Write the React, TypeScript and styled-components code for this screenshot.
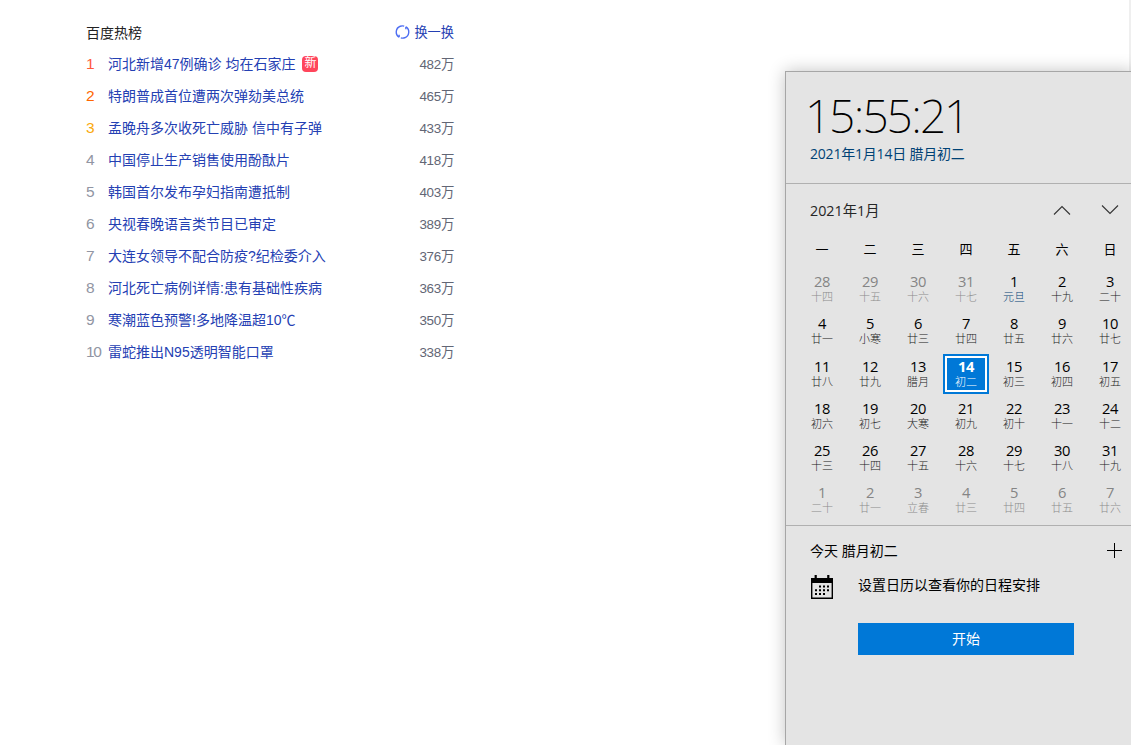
import React from "react";
import styled, { createGlobalStyle } from "styled-components";

const GlobalStyle = createGlobalStyle`
  * { box-sizing: border-box; }
  body { margin: 0; background: #fff; overflow: hidden; }
`;

const Page = styled.div`
  display: flex;
  justify-content: space-between;
  width: 1131px;
  height: 745px;
  overflow: hidden;
  background: #fff;
`;

const HotSearch = styled.section`
  width: 368px;
  margin: 16px 0 0 86px;
  font-family: "Liberation Sans", "Noto Sans CJK SC", sans-serif;
  font-size: 14px;
`;

const HotHeader = styled.header`
  display: flex;
  justify-content: space-between;
  align-items: center;
  height: 31px;
  color: #222;
`;

const Refresh = styled.a`
  display: flex;
  align-items: center;
  gap: 4px;
  font-size: 13.2px;
  color: #2440b3;
`;

const HotList = styled.ol`
  list-style: none;
  margin: 0;
  padding: 0;
`;

const HotItem = styled.li`
  display: flex;
  align-items: center;
  height: 32px;
  white-space: nowrap;
`;

const Rank = styled.span<{ $color: string }>`
  flex: 0 0 22px;
  padding-top: 2px;
  font-size: 15.5px;
  letter-spacing: -1.4px;
  line-height: 20px;
  color: ${(p) => p.$color};
`;

const Topic = styled.a`
  color: #2440b3;
`;

const NewBadge = styled.span`
  width: 16px;
  height: 16px;
  margin: 1px 0 0 7px;
  border-radius: 4px;
  background: #ff455b;
  color: #fff;
  font-size: 12px;
  line-height: 15px;
  text-align: center;
`;

const Heat = styled.span`
  margin-left: auto;
  padding-bottom: 1px;
  font-size: 13.4px;
  letter-spacing: -0.3px;
  color: #626675;
`;

const Backdrop = styled.aside`
  display: flex;
  align-items: flex-end;
  width: 346px;
  border-right: 2px solid #efefef;
`;

const Flyout = styled.section`
  flex: 0 0 346px;
  height: 674px;
  border: solid #a6a6a6;
  border-width: 1px 0 0 1px;
  background: #e4e4e4;
  box-shadow: 0 0 16px rgba(0, 0, 0, 0.24);
  font-family: "Open Sans", "Noto Sans CJK SC", sans-serif;
  font-size: 14px;
  color: #000;
`;

const ClockSection = styled.div`
  height: 112px;
  padding: 15px 0 0 19px;
  border-bottom: 1px solid #b0b0b0;
`;

const Clock = styled.div`
  display: flex;
  height: 57px;
  font-family: "Noto Sans", "Open Sans", sans-serif;
  font-size: 46px;
  font-weight: 200;
  line-height: 56px;
  letter-spacing: -2.3px;
`;

const Colon = styled.span`
  padding: 0 0.4px 0 1px;
`;

const Today = styled.div`
  padding-left: 5px;
  line-height: 20px;
  letter-spacing: -0.2px;
  color: #004275;
`;

const MonthSection = styled.div`
  height: 342px;
  border-bottom: 1px solid #b0b0b0;
`;

const MonthHeader = styled.div`
  display: flex;
  align-items: center;
  height: 53px;
  padding: 0 0 2px 24px;
  font-size: 14.3px;
  color: #262626;
`;

const Arrows = styled.div`
  display: flex;
  gap: 30px;
  margin-left: auto;
  padding-right: 15px;
`;

const Grid = styled.div`
  display: grid;
  grid-template-columns: repeat(7, 48px);
  padding-left: 12px;
`;

const Weekday = styled.div`
  height: 32px;
  font-size: 13px;
  line-height: 25px;
  text-align: center;
`;

const Day = styled.div<{ $dim?: boolean; $selected?: boolean }>`
  display: flex;
  flex-direction: column;
  align-items: center;
  justify-self: center;
  width: 46px;
  height: 40px;
  margin-bottom: 2.3px;
  padding-top: ${(p) => (p.$selected ? "1px" : "3px")};
  border: ${(p) => (p.$selected ? "2px solid #0078d7" : "0")};
  background: ${(p) => (p.$selected ? "#0078d7" : "transparent")};
  box-shadow: ${(p) => (p.$selected ? "inset 0 0 0 2px #fff" : "none")};
  color: ${(p) => (p.$selected ? "#fff" : p.$dim ? "#858585" : "#000")};
`;

const DayNumber = styled.span<{ $bold?: boolean }>`
  height: 18px;
  font-size: 14.7px;
  font-weight: ${(p) => (p.$bold ? 700 : 400)};
  line-height: 18px;
  letter-spacing: -0.4px;
`;

const Lunar = styled.span<{ $tone: string }>`
  font-family: "Noto Sans CJK SC", sans-serif;
  font-size: 11px;
  line-height: 13px;
  font-weight: 300;
  color: ${(p) => p.$tone};
`;

const Agenda = styled.div`
  padding: 13px 9px 0 24px;
`;

const AgendaHeader = styled.div`
  display: flex;
  justify-content: space-between;
  align-items: center;
  height: 22px;
  padding-right: 3px;
`;

const Setup = styled.div`
  display: flex;
  height: 62px;
  padding-top: 14px;
`;

const SetupText = styled.span`
  margin-left: 24px;
  line-height: 20px;
`;

const StartButton = styled.button`
  display: block;
  width: 216px;
  height: 32px;
  margin-left: 48px;
  padding: 0 0 2px;
  border: 0;
  background: #0078d7;
  color: #fff;
  font: inherit;
`;

const topics: [string, string][] = [
  ["河北新增47例确诊 均在石家庄", "482万"],
  ["特朗普成首位遭两次弹劾美总统", "465万"],
  ["孟晚舟多次收死亡威胁 信中有子弹", "433万"],
  ["中国停止生产销售使用酚酞片", "418万"],
  ["韩国首尔发布孕妇指南遭抵制", "403万"],
  ["央视春晚语言类节目已审定", "389万"],
  ["大连女领导不配合防疫?纪检委介入", "376万"],
  ["河北死亡病例详情:患有基础性疾病", "363万"],
  ["寒潮蓝色预警!多地降温超10℃", "350万"],
  ["雷蛇推出N95透明智能口罩", "338万"],
];
const rankColors = ["#ff5a3c", "#f60", "#faa90e"];

const weekdays = ["一", "二", "三", "四", "五", "六", "日"];
const lunar = (
  "十四 十五 十六 十七 元旦 十九 二十 廿一 小寒 廿三 廿四 廿五 廿六 廿七 " +
  "廿八 廿九 腊月 初二 初三 初四 初五 初六 初七 大寒 初九 初十 十一 十二 " +
  "十三 十四 十五 十六 十七 十八 十九 二十 廿一 立春 廿三 廿四 廿五 廿六"
).split(" ");
const days = lunar.map((label, i) => {
  const dim = i < 4 || i > 34;
  const number = i < 4 ? 28 + i : i > 34 ? i - 34 : i - 3;
  const selected = i === 17;
  const tone = selected ? "#fff" : dim ? "#8c8c8c" : label === "元旦" ? "#004275" : "#222";
  return { label, dim, number, selected, tone };
});

const RefreshIcon = () => (
  <svg width="15" height="16" viewBox="0 0 16 16" fill="none" stroke="#4e6ef2" strokeWidth="1.5">
    <path d="M4.2 13.4A6.5 6.5 0 0 1 5.6 1.9A6.5 6.5 0 0 1 9.8 1.8M11.8 2.6A6.5 6.5 0 0 1 10.4 14.1A6.5 6.5 0 0 1 6.2 14.2" />
    <path d="M11.6 2.4V5M4.4 13.6V11" />
  </svg>
);

const CalendarIcon = () => (
  <svg width="24" height="26" viewBox="0 0 24 26">
    <path d="M1 3H4.6V0H6.8V3H17.2V0H19.4V3H23V24H1ZM2.4 8V22.6H21.6V8Z" fillRule="evenodd" />
    <path d="M9 10.5h2v2h-2zM13 10.5h2v2h-2zM17 10.5h2v2h-2zM5 14.3h2v2h-2zM9 14.3h2v2h-2zM13 14.3h2v2h-2zM17 14.3h2v2h-2zM5 18h2v2h-2zM9 18h2v2h-2zM13 18h2v2h-2z" />
  </svg>
);

export default function App() {
  return (
    <>
      <GlobalStyle />
      <Page>
        <HotSearch>
          <HotHeader>
            <span>百度热榜</span>
            <Refresh>
              <RefreshIcon />
              换一换
            </Refresh>
          </HotHeader>
          <HotList>
            {topics.map(([title, heat], i) => (
              <HotItem key={title}>
                <Rank $color={rankColors[i] ?? "#9195a3"}>{i + 1}</Rank>
                <Topic>{title}</Topic>
                {i === 0 && <NewBadge>新</NewBadge>}
                <Heat>{heat}</Heat>
              </HotItem>
            ))}
          </HotList>
        </HotSearch>
        <Backdrop>
          <Flyout>
            <ClockSection>
              <Clock>
                15<Colon>:</Colon>55<Colon>:</Colon>21
              </Clock>
              <Today>2021年1月14日 腊月初二</Today>
            </ClockSection>
            <MonthSection>
              <MonthHeader>
                2021年1月
                <Arrows>
                  <svg width="18" height="12" fill="none" stroke="#333" strokeWidth="1.1">
                    <path d="M1 10.5L9 2.5L17 10.5" />
                  </svg>
                  <svg width="18" height="12" fill="none" stroke="#333" strokeWidth="1.1">
                    <path d="M1 1.5L9 9.5L17 1.5" />
                  </svg>
                </Arrows>
              </MonthHeader>
              <Grid>
                {weekdays.map((w) => (
                  <Weekday key={w}>{w}</Weekday>
                ))}
              </Grid>
              <Grid>
                {days.map((d, i) => (
                  <Day key={i} $dim={d.dim} $selected={d.selected}>
                    <DayNumber $bold={d.selected}>{d.number}</DayNumber>
                    <Lunar $tone={d.tone}>{d.label}</Lunar>
                  </Day>
                ))}
              </Grid>
            </MonthSection>
            <Agenda>
              <AgendaHeader>
                今天 腊月初二
                <svg width="15" height="15" stroke="#000" shapeRendering="crispEdges">
                  <path d="M0 7.5H15M7.5 0V15" />
                </svg>
              </AgendaHeader>
              <Setup>
                <CalendarIcon />
                <SetupText>设置日历以查看你的日程安排</SetupText>
              </Setup>
              <StartButton>开始</StartButton>
            </Agenda>
          </Flyout>
        </Backdrop>
      </Page>
    </>
  );
}
